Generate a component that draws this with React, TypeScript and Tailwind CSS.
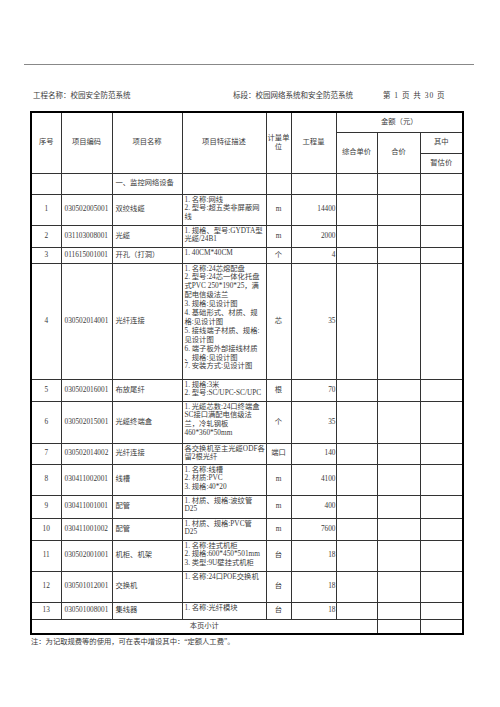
import React from 'react';

type Row = {
  no: string;
  code: string;
  name: string;
  desc: string[];
  unit: string;
  qty: string;
  h: string;
};

const rows: Row[] = [
  { no: '1', code: '030502005001', name: '双绞线缆', desc: ['1. 名称:网线', '2. 型号:超五类非屏蔽网', '线'], unit: 'm', qty: '14400', h: 'h-[31px]' },
  { no: '2', code: '031103008001', name: '光缆', desc: ['1. 规格、型号:GYDTA型', '光缆/24B1'], unit: 'm', qty: '2000', h: 'h-[22px]' },
  { no: '3', code: '011615001001', name: '开孔（打洞）', desc: ['1. 40CM*40CM'], unit: '个', qty: '4', h: 'h-[16px]' },
  {
    no: '4',
    code: '030502014001',
    name: '光纤连接',
    desc: [
      '1. 名称:24芯熔配盘',
      '2. 型号:24芯一体化托盘',
      '式PVC 250*190*25，满',
      '配电信级法兰',
      '3. 规格:见设计图',
      '4. 基础形式、材质、规',
      '格:见设计图',
      '5. 接线端子材质、规格:',
      '见设计图',
      '6. 端子板外部接线材质',
      '、规格:见设计图',
      '7. 安装方式:见设计图',
    ],
    unit: '芯',
    qty: '35',
    h: 'h-[116px]',
  },
  { no: '5', code: '030502016001', name: '布放尾纤', desc: ['1. 规格:3米', '2. 型号:SC/UPC-SC/UPC'], unit: '根', qty: '70', h: 'h-[22px]' },
  { no: '6', code: '030502015001', name: '光缆终端盒', desc: ['1. 光缆芯数:24口终端盒', 'SC接口满配电信级法', '兰，冷轧钢板', '460*360*50mm'], unit: '个', qty: '35', h: 'h-[42px]' },
  { no: '7', code: '030502014002', name: '光纤连接', desc: ['各交换机至主光缆ODF各', '留2根光纤'], unit: '端口', qty: '140', h: 'h-[21px]' },
  { no: '8', code: '030411002001', name: '线槽', desc: ['1. 名称:线槽', '2. 材质:PVC', '3. 规格:40*20'], unit: 'm', qty: '4100', h: 'h-[31px]' },
  { no: '9', code: '030411001001', name: '配管', desc: ['1. 材质、规格:波纹管', 'D25'], unit: 'm', qty: '400', h: 'h-[23px]' },
  { no: '10', code: '030411001002', name: '配管', desc: ['1. 材质、规格:PVC管', 'D25'], unit: 'm', qty: '7600', h: 'h-[22px]' },
  { no: '11', code: '030502001001', name: '机柜、机架', desc: ['1. 名称:挂式机柜', '2. 规格:600*450*501mm', '3. 类型:9U壁挂式机柜'], unit: '台', qty: '18', h: 'h-[31px]' },
  { no: '12', code: '030501012001', name: '交换机', desc: ['1. 名称:24口POE交换机'], unit: '台', qty: '18', h: 'h-[31px]' },
  { no: '13', code: '030501008001', name: '集线器', desc: ['1. 名称:光纤模块'], unit: '台', qty: '18', h: 'h-[17px]' },
];

const cell = 'border border-[#333] p-0 align-middle overflow-hidden whitespace-nowrap';

export default function App() {
  return (
    <div
      className="w-[500px] h-[707px] bg-white text-[#3a3a3a]"
      style={{ fontFamily: '"Liberation Serif", "Noto Sans CJK SC", serif' }}
    >
      <div className="pt-[64px] px-[24px]">
        <div className="border-t border-[#888] w-[450px]" />
        <div className="flex items-center h-[10px] mt-[26px] pl-[9px] text-[7.5px] leading-[10px]">
          <span className="w-[200px]">工程名称：校园安全防范系统</span>
          <span className="w-[150px]">标段：校园网络系统和安全防范系统</span>
          <span className="tracking-[1px]">第 1 页 共 30 页</span>
        </div>
      </div>

      <table className="ml-[30px] mt-[10px] w-[434px] table-fixed border-collapse border-2 border-black text-[7.3px] leading-[8.9px]">
        <colgroup>
          <col className="w-[30px]" />
          <col className="w-[51px]" />
          <col className="w-[70px]" />
          <col className="w-[84px]" />
          <col className="w-[25px]" />
          <col className="w-[45px]" />
          <col className="w-[41px]" />
          <col className="w-[43px]" />
          <col className="w-[43px]" />
        </colgroup>
        <thead>
          <tr className="h-[20px]">
            <th rowSpan={3} className={`${cell} font-normal text-center`}>序号</th>
            <th rowSpan={3} className={`${cell} font-normal text-center`}>项目编码</th>
            <th rowSpan={3} className={`${cell} font-normal text-center`}>项目名称</th>
            <th rowSpan={3} className={`${cell} font-normal text-center`}>项目特征描述</th>
            <th rowSpan={3} className={`${cell} font-normal text-center`}>
              计量单
              <br />
              位
            </th>
            <th rowSpan={3} className={`${cell} font-normal text-center`}>工程量</th>
            <th colSpan={3} className={`${cell} font-normal text-center`}>金额（元）</th>
          </tr>
          <tr className="h-[21px]">
            <th rowSpan={2} className={`${cell} font-normal text-center`}>综合单价</th>
            <th rowSpan={2} className={`${cell} font-normal text-center`}>合价</th>
            <th className={`${cell} font-normal text-center`}>其中</th>
          </tr>
          <tr className="h-[20px]">
            <th className={`${cell} font-normal text-center`}>暂估价</th>
          </tr>
        </thead>
        <tbody>
          <tr className="h-[21px]">
            <td className={cell} />
            <td className={cell} />
            <td className={`${cell} pl-[3px]`}>一、监控网络设备</td>
            <td className={cell} />
            <td className={cell} />
            <td className={cell} />
            <td className={cell} />
            <td className={cell} />
            <td className={cell} />
          </tr>
          {rows.map((r) => (
            <tr key={r.no} className={r.h}>
              <td className={`${cell} text-center`}>{r.no}</td>
              <td className={`${cell} pl-[3px]`}>{r.code}</td>
              <td className={`${cell} pl-[3px]`}>{r.name}</td>
              <td className={`${cell} !align-top pl-[2px] pt-[1px]`}>
                {r.desc.map((line, i) => (
                  <div key={i}>{line}</div>
                ))}
              </td>
              <td className={`${cell} text-center`}>{r.unit}</td>
              <td className={`${cell} text-right`}>{r.qty}</td>
              <td className={cell} />
              <td className={cell} />
              <td className={cell} />
            </tr>
          ))}
          <tr className="h-[15px]">
            <td colSpan={7} className={`${cell} text-center`}>本页小计</td>
            <td className={cell} />
            <td className={cell} />
          </tr>
        </tbody>
      </table>

      <p className="ml-[31px] mt-[2px] text-[7.3px] leading-[9px]">
        注：为记取规费等的使用，可在表中增设其中：“定额人工费”。
      </p>
    </div>
  );
}
